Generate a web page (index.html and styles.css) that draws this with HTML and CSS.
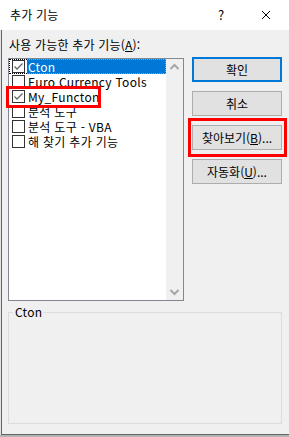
FILE: index.html
```html
<!DOCTYPE html>
<html lang="ko">
<head>
<meta charset="utf-8">
<title>추가 기능</title>
<link rel="stylesheet" href="styles.css">
</head>
<body>
<div class="window">
  <div class="titlebar">
    <span class="title">추가 기능</span>
    <span class="help">?</span>
    <span class="close"><svg width="10" height="10" viewBox="0 0 10 10"><path d="M1 1L9 9M9 1L1 9" stroke="#000" stroke-width="1" fill="none"/></svg></span>
  </div>
  <div class="frame">
    <div class="main">
      <div class="left">
        <div class="label">사용 가능한 추가 기능(<u>A</u>):</div>
        <div class="listbox">
          <div class="items">
            <div class="item focused"><span class="cbwrap"><span class="cb checked"><svg width="11" height="11" viewBox="0 0 11 11"><path d="M1.5 5.5L4 8L9.5 2.5" stroke="#666" stroke-width="1.3" fill="none"/></svg></span></span><span class="text sel">Cton</span></div>
            <div class="item"><span class="cbwrap"><span class="cb"></span></span><span class="text">Euro Currency Tools</span></div>
            <div class="item"><span class="cbwrap"><span class="cb checked"><svg width="11" height="11" viewBox="0 0 11 11"><path d="M1.5 5.5L4 8L9.5 2.5" stroke="#666" stroke-width="1.3" fill="none"/></svg></span></span><span class="text">My_Functon</span></div>
            <div class="item"><span class="cbwrap"><span class="cb"></span></span><span class="text">분석 도구</span></div>
            <div class="item"><span class="cbwrap"><span class="cb"></span></span><span class="text">분석 도구 - VBA</span></div>
            <div class="item"><span class="cbwrap"><span class="cb"></span></span><span class="text">해 찾기 추가 기능</span></div>
          </div>
          <div class="scrollbar">
            <svg width="17" height="17" viewBox="0 0 17 17"><path d="M4.5 10L8.5 6L12.5 10" stroke="#a6a6a6" stroke-width="2" fill="none"/></svg>
            <svg width="17" height="17" viewBox="0 0 17 17"><path d="M4.5 7L8.5 11L12.5 7" stroke="#a6a6a6" stroke-width="2" fill="none"/></svg>
          </div>
          <div class="mark mark-item"></div>
        </div>
      </div>
      <div class="buttons">
        <button class="btn default">확인</button>
        <button class="btn">취소</button>
        <div class="btnwrap"><button class="btn">찾아보기(<u>B</u>)...</button><div class="mark mark-btn"></div></div>
        <button class="btn">자동화(<u>U</u>)...</button>
      </div>
    </div>
    <fieldset class="desc"><legend>Cton</legend><div class="desc-body"></div></fieldset>
  </div>
  <div class="shadow"></div>
</div>
</body>
</html>
```

FILE: styles.css
```css
* { box-sizing: border-box; }
html, body { margin: 0; padding: 0; }
body {
  width: 289px;
  height: 437px;
  overflow: hidden;
  background: #fff;
  font-family: "Noto Sans CJK KR", "Noto Sans", sans-serif;
  font-size: 12px;
  color: #000;
}
.window {
  width: 289px;
  height: 437px;
  display: flex;
  flex-direction: column;
  background: #e4e4e4;
}
.titlebar {
  height: 30px;
  background: #fff;
  display: flex;
  align-items: center;
  padding-left: 10px;
}
.title { flex: 1; line-height: 16px; letter-spacing: 0.2px; }
.help { width: 12px; text-align: center; line-height: 16px; font-size: 13px; }
.close { width: 10px; height: 10px; margin-left: 34px; margin-right: 18px; display: flex; }
.frame {
  margin-left: 1px;
  height: 405px;
  border-left: 1px solid #646464;
  border-bottom: 1px solid #646464;
  background: #f0f0f0;
  padding: 7px 7px 0 6px;
}
.shadow { height: 2px; background: #b4b4b4; }
.main { display: flex; gap: 8px; }
.left { width: 176px; }
.label { height: 16px; line-height: 16px; padding-left: 1px; letter-spacing: 0.2px; }
.label u, .btn u { text-decoration: underline; text-underline-offset: 1px; }
.listbox {
  position: relative;
  margin-top: 5px;
  height: 243px;
  border: 1px solid #828790;
  background: #fff;
  display: flex;
}
.items { flex: 1; }
.item { height: 15px; display: flex; line-height: 15px; }
.cbwrap { width: 18px; padding-left: 3px; display: flex; align-items: center; }
.cb {
  width: 13px; height: 13px;
  border: 1px solid #333;
  background: #fff;
  display: flex; align-items: center; justify-content: center;
}
.text { padding-left: 1px; white-space: nowrap; letter-spacing: 0.3px; }
.text.sel { flex: 1; background: #0078d7; color: #fff; border: 1px dotted #ff8728; border-left: none; line-height: 13px; }
.item.focused .cbwrap { border: 1px dotted #000; border-right: none; padding-left: 2px; }
.scrollbar {
  width: 17px;
  background: #f0f0f0;
  display: flex;
  flex-direction: column;
  justify-content: space-between;
}
.scrollbar svg { display: block; }
.mark { position: absolute; border: 3px solid #ff0000; pointer-events: none; }
.mark-item { left: -3px; top: 27px; width: 95px; height: 22px; }
.buttons { width: 90px; display: flex; flex-direction: column; gap: 9px; padding-top: 20px; }
.btn {
  width: 90px; height: 25px;
  border: 1px solid #adadad;
  background: #e1e1e1;
  font-family: inherit;
  font-size: 12px;
  color: #000;
  padding: 0;
  line-height: 16px;
}
.btn.default { border: 2px solid #0078d7; }
.btnwrap { position: relative; height: 25px; }
.mark-btn { left: -4px; top: -7px; width: 99px; height: 39px; }
.desc {
  margin: 4px 0 0 0;
  width: 274px;
  padding: 0 4px;
  border: 1px solid #dcdcdc;
}
.desc legend { padding: 0 2px; line-height: 14px; height: 14px; letter-spacing: 0.3px; }
.desc-body { height: 104px; }
```
